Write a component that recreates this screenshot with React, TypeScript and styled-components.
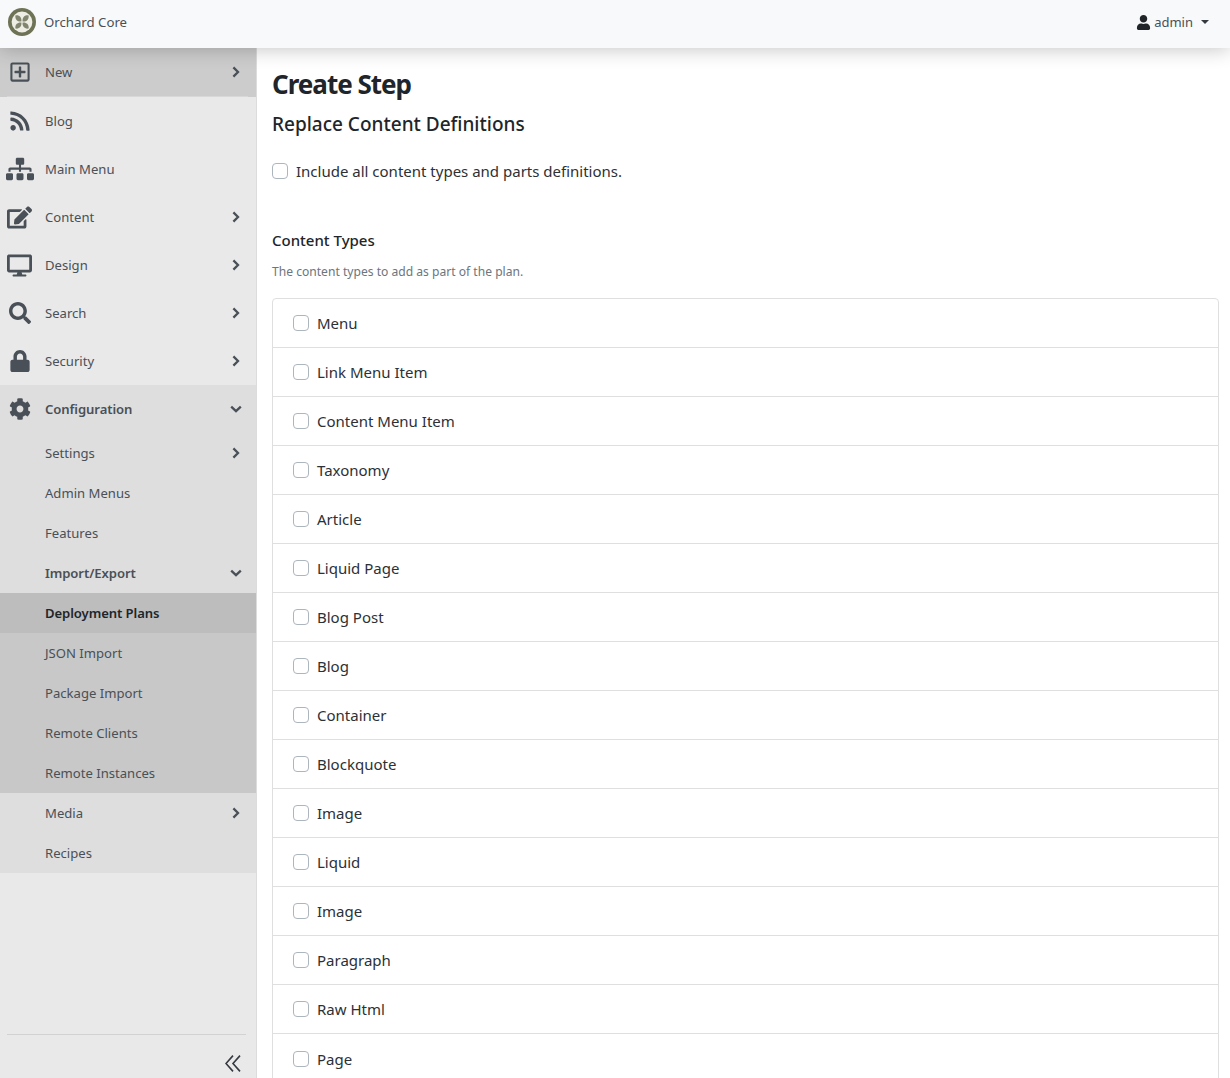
import React from "react";
import styled, { createGlobalStyle } from "styled-components";
import {
  FaRegPlusSquare, FaRss, FaSitemap, FaEdit, FaDesktop, FaSearch, FaLock, FaCog, FaUser,
} from "react-icons/fa";

const FONT = `"Noto Sans", "Open Sans", "Liberation Sans", sans-serif`;

const Global = createGlobalStyle`
  html, body { margin: 0; padding: 0; height: 100%; overflow: hidden; background: #fff; }
  body { font-family: ${FONT}; color: #212529; }
  * { box-sizing: border-box; }
`;

const Page = styled.div`
  display: flex;
  flex-direction: column;
  width: 1230px;
  height: 1078px;
  overflow: hidden;
`;

const TopBar = styled.header`
  position: relative;
  z-index: 2;
  flex: 0 0 48px;
  display: flex;
  align-items: center;
  justify-content: space-between;
  padding: 0 21px 4px 8px;
  background: #f8f9fa;
  box-shadow: 0 1px 20px rgba(0, 0, 0, 0.24);
`;

const Brand = styled.div`
  display: flex;
  align-items: center;
  gap: 8px;
  font-size: 13.2px;
  color: #495057;
`;

const UserMenu = styled.div`
  display: flex;
  align-items: center;
  font-size: 13px;
  color: #495057;
  svg { color: #212529; margin-right: 3px; }
`;

const Caret = styled.span`
  width: 0;
  height: 0;
  margin-left: 8px;
  border-top: 4px solid #343a40;
  border-left: 4px solid transparent;
  border-right: 4px solid transparent;
`;

const Body = styled.div`
  flex: 1;
  min-height: 0;
  display: flex;
`;

const Sidebar = styled.nav`
  flex: 0 0 257px;
  display: flex;
  flex-direction: column;
  background: #e9e9e9;
  border-right: 1px solid #dcdcdc;
`;

const Tint = { none: "transparent", open: "#dedede", deep: "#c8c8c8", active: "#bdbdbd", hover: "#cccccc" };

const TopItem = styled.div<{ $tint?: keyof typeof Tint; $tall?: boolean }>`
  position: relative;
  flex: 0 0 ${(p) => (p.$tall ? 49 : 48)}px;
  display: flex;
  align-items: center;
  padding: 0 14px ${(p) => (p.$tall ? 1 : 0)}px 0;
  background: ${(p) => Tint[p.$tint ?? "none"]};
  font-size: 13.1px;
  color: #495057;
`;

const IconSlot = styled.span`
  flex: 0 0 45px;
  display: flex;
  justify-content: center;
  padding-right: 6px;
  color: #495057;
  line-height: 0;
`;

const Label = styled.span<{ $bold?: boolean; $dark?: boolean }>`
  flex: 1;
  font-weight: ${(p) => (p.$bold ? 600 : 400)};
  letter-spacing: ${(p) => (p.$bold ? "-0.08px" : "0")};
  color: ${(p) => (p.$dark ? "#212529" : "#495057")};
`;

const ChevronBox = styled.svg`
  flex: 0 0 12px;
  width: 12px;
  height: 12px;
  fill: none;
  stroke: #495057;
  stroke-width: 2.3;
`;

const ChevronRight = () => (
  <ChevronBox viewBox="0 0 12 12" aria-hidden="true"><path d="M3.4 1.4 L8 6 L3.4 10.6" /></ChevronBox>
);

const ChevronDown = () => (
  <ChevronBox viewBox="0 0 12 12" aria-hidden="true"><path d="M1.2 3.6 L6 8.2 L10.8 3.6" /></ChevronBox>
);

const SubItem = styled.div<{ $tint?: keyof typeof Tint }>`
  flex: 0 0 40px;
  display: flex;
  align-items: center;
  padding: 0 14px 0 45px;
  background: ${(p) => Tint[p.$tint ?? "open"]};
  font-size: 13.1px;
`;

const HoverRule = styled.span`
  position: absolute;
  left: 7px;
  right: 8px;
  bottom: 0;
  height: 1px;
  background: #d8d8d8;
`;

const SideFooter = styled.div`
  margin: auto 10px 0 7px;
  height: 44px;
  border-top: 1px solid #d2d2d2;
  display: flex;
  justify-content: flex-end;
  padding: 20px 5px 0 0;
  line-height: 0;
`;

const DoubleLeft = styled.svg`
  width: 16px;
  height: 17px;
  fill: none;
  stroke: #343a40;
  stroke-width: 1.6;
`;

const Main = styled.main`
  flex: 1;
  min-width: 0;
  padding: 0 11px 0 15px;
`;

const Title = styled.h1`
  margin: 16px 0 0;
  font-size: 26px;
  line-height: 40px;
  font-weight: 700;
  letter-spacing: -1px;
  color: #212529;
`;

const Subtitle = styled.h2`
  margin: 6px 0 0;
  font-size: 19px;
  line-height: 29px;
  font-weight: 500;
  color: #212529;
`;

const CheckRow = styled.label`
  display: flex;
  align-items: center;
  gap: 8px;
  margin-top: 20px;
  height: 24px;
  font-size: 15px;
  color: #2c3136;
`;

const Box = styled.span`
  flex: 0 0 16px;
  width: 16px;
  height: 16px;
  background: #fff;
  border: 1px solid #adb5bd;
  border-radius: 4px;
`;

const SectionLabel = styled.div`
  margin-top: 45px;
  font-size: 15px;
  line-height: 24px;
  font-weight: 500;
`;

const Hint = styled.div`
  margin-top: 10px;
  font-size: 12.1px;
  line-height: 20px;
  color: #6c757d;
`;

const List = styled.div`
  margin-top: 16px;
  border: 1px solid #dfdfdf;
  border-radius: 4px;
`;

const ListRow = styled.div`
  height: 49px;
  display: flex;
  align-items: center;
  gap: 8px;
  padding: 0 20px;
  border-bottom: 1px solid #dfdfdf;
  font-size: 15px;
  color: #2c3136;
  &:last-child { border-bottom: 0; }
`;

const PETAL = "M13.4 13.4C9.6 13.8 6.8 11.6 7.4 7.4 11.6 6.8 13.8 9.6 13.4 13.4Z";

const LogoMark = () => (
  <svg width="28" height="28" viewBox="0 0 28 28" aria-hidden="true">
    <circle cx="14" cy="14" r="14" fill="#6e7356" />
    <circle cx="14" cy="14" r="10.4" fill="#eeeee4" />
    <g fill="#83866f">
      {[0, 90, 180, 270].map((a) => (
        <path key={a} d={PETAL} transform={`rotate(${a} 14 14)`} />
      ))}
    </g>
  </svg>
);

const types = ["Menu", "Link Menu Item", "Content Menu Item", "Taxonomy", "Article", "Liquid Page", "Blog Post", "Blog", "Container", "Blockquote", "Image", "Liquid", "Image", "Paragraph", "Raw Html", "Page"];

export default function App() {
  return (
    <Page>
      <Global />
      <TopBar>
        <Brand><LogoMark />Orchard Core</Brand>
        <UserMenu><FaUser size={15} />admin<Caret /></UserMenu>
      </TopBar>
      <Body>
        <Sidebar>
          <TopItem $tint="hover" $tall><IconSlot><FaRegPlusSquare size={22} /></IconSlot><Label>New</Label><ChevronRight /><HoverRule /></TopItem>
          <TopItem><IconSlot><FaRss size={22} /></IconSlot><Label>Blog</Label></TopItem>
          <TopItem><IconSlot><FaSitemap size={28} /></IconSlot><Label>Main Menu</Label></TopItem>
          <TopItem><IconSlot><FaEdit size={25} /></IconSlot><Label>Content</Label><ChevronRight /></TopItem>
          <TopItem><IconSlot><FaDesktop size={25} /></IconSlot><Label>Design</Label><ChevronRight /></TopItem>
          <TopItem><IconSlot><FaSearch size={22} /></IconSlot><Label>Search</Label><ChevronRight /></TopItem>
          <TopItem><IconSlot><FaLock size={22} /></IconSlot><Label>Security</Label><ChevronRight /></TopItem>
          <TopItem $tint="open"><IconSlot><FaCog size={22} /></IconSlot><Label $bold>Configuration</Label><ChevronDown /></TopItem>
          <SubItem><Label>Settings</Label><ChevronRight /></SubItem>
          <SubItem><Label>Admin Menus</Label></SubItem>
          <SubItem><Label>Features</Label></SubItem>
          <SubItem><Label $bold>Import/Export</Label><ChevronDown /></SubItem>
          <SubItem $tint="active"><Label $bold $dark>Deployment Plans</Label></SubItem>
          <SubItem $tint="deep"><Label>JSON Import</Label></SubItem>
          <SubItem $tint="deep"><Label>Package Import</Label></SubItem>
          <SubItem $tint="deep"><Label>Remote Clients</Label></SubItem>
          <SubItem $tint="deep"><Label>Remote Instances</Label></SubItem>
          <SubItem><Label>Media</Label><ChevronRight /></SubItem>
          <SubItem><Label>Recipes</Label></SubItem>
          <SideFooter>
            <DoubleLeft viewBox="0 0 16 17" aria-hidden="true"><path d="M8 .6 L1 8.5 L8 16.4 M15 .6 L8 8.5 L15 16.4" /></DoubleLeft>
          </SideFooter>
        </Sidebar>
        <Main>
          <Title>Create Step</Title>
          <Subtitle>Replace Content Definitions</Subtitle>
          <CheckRow><Box />Include all content types and parts definitions.</CheckRow>
          <SectionLabel>Content Types</SectionLabel>
          <Hint>The content types to add as part of the plan.</Hint>
          <List>
            {types.map((t, i) => (
              <ListRow key={i}><Box />{t}</ListRow>
            ))}
          </List>
        </Main>
      </Body>
    </Page>
  );
}
